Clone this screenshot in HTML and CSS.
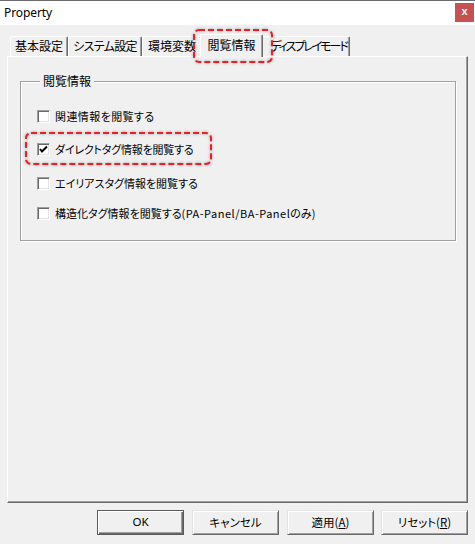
FILE: index.html
```html
<!DOCTYPE html>
<html lang="ja">
<head>
<meta charset="utf-8">
<title>Property</title>
<link rel="stylesheet" href="styles.css">
</head>
<body>
<div class="window">
  <div class="titlebar">
    <span class="title">Property</span>
    <span class="close">x</span>
  </div>
  <div class="content">
    <div class="tabs">
      <div class="tab t1">基本設定</div>
      <div class="tab t2">システム設定</div>
      <div class="tab t3">環境変数</div>
      <div class="tab t4 active">閲覧情報</div>
      <div class="tab t5">ディスプレイモード</div>
    </div>
    <div class="panel">
      <fieldset class="group">
        <legend>閲覧情報</legend>
        <div class="row r1"><span class="cb"></span><span class="lbl">関連情報を閲覧する</span></div>
        <div class="row r2"><span class="cb checked"><svg viewBox="0 0 13 13" width="13" height="13"><path d="M3 6 L5 8.5 L10 3.5" fill="none" stroke="#000" stroke-width="2"/></svg></span><span class="lbl">ダイレクトタグ情報を閲覧する</span></div>
        <div class="row r3"><span class="cb"></span><span class="lbl">エイリアスタグ情報を閲覧する</span></div>
        <div class="row r4"><span class="cb"></span><span class="lbl">構造化タグ情報を閲覧する<span class="latin">(PA-Panel/BA-Panel</span>のみ)</span></div>
      </fieldset>
    </div>
    <div class="buttons">
      <div class="btn default">OK</div>
      <div class="btn">キャンセル</div>
      <div class="btn">適用(<u>A</u>)</div>
      <div class="btn">リセット(<u>R</u>)</div>
    </div>
  </div>
  <svg class="hl hl-tab" width="82" height="36" viewBox="0 0 82 36"><rect x="2" y="2" width="78" height="32" rx="5" ry="5"/></svg>
  <svg class="hl hl-row" width="189" height="35" viewBox="0 0 189 35"><rect x="2" y="2" width="185" height="31" rx="5" ry="5"/></svg>
</div>
</body>
</html>
```

FILE: styles.css
```css
* { box-sizing: border-box; }
html, body { margin: 0; padding: 0; }
body {
  width: 475px;
  height: 544px;
  overflow: hidden;
  background: #f0f0f0;
  font-family: "Noto Sans CJK JP", "Noto Sans", sans-serif;
  font-feature-settings: "palt" 1;
  font-size: 12px;
  color: #000;
}
.window {
  position: relative;
  width: 475px;
  height: 544px;
  background: #f0f0f0;
  border-top: 1px solid #6b6b6b;
}
.titlebar {
  height: 24px;
  background: #fff;
  display: flex;
  align-items: flex-start;
}
.title {
  font-family: "Noto Sans", sans-serif;
  font-size: 12px;
  line-height: 24px;
  padding-left: 4px;
  letter-spacing: -0.1px;
}
.close {
  margin-left: auto;
  margin-right: 1px;
  margin-top: 2px;
  width: 19px;
  height: 19px;
  background: #c75050;
  color: #fff;
  font-family: "Liberation Sans", sans-serif;
  font-weight: bold;
  font-size: 11px;
  line-height: 17px;
  text-align: center;
}
.content {
  padding-top: 9px;
}
.tabs {
  display: flex;
  align-items: flex-end;
  height: 22px;
  margin-left: 10px;
}
.tab {
  position: relative;
  height: 20px;
  background: #f0f0f0;
  border-top: 1px solid #fff;
  border-left: 1px solid #fff;
  border-right: 1px solid #696969;
  box-shadow: inset -1px 0 0 #a0a0a0;
  text-align: center;
  line-height: 18px;
  white-space: nowrap;
  font-size: 12px;
  border-top-left-radius: 2px;
  border-top-right-radius: 2px;
}
.t1 { width: 58px; }
.t2 { width: 74px; letter-spacing: -0.7px; }
.t3 { width: 60px; }
.t4 { width: 63px; }
.t5 { width: 89px; padding-left: 6px; letter-spacing: -2.1px; }
.tab.active {
  height: 23px;
  margin: 0 -2px -1px -2px;
  z-index: 2;
  line-height: 20px;
}
.panel {
  position: relative;
  z-index: 1;
  margin-left: 7px;
  width: 461px;
  height: 447px;
  border-top: 1px solid #fff;
  border-left: 1px solid #fff;
  border-right: 1px solid #696969;
  border-bottom: 1px solid #696969;
  box-shadow: inset -1px -1px 0 #a0a0a0;
  padding-top: 16px;
  padding-left: 12px;
}
.group {
  margin: 0;
  width: 436px;
  height: 168px;
  padding: 19px 0 0 16px;
  border: 1px solid #a0a0a0;
  box-shadow: inset 1px 1px 0 #fff, 1px 1px 0 #fff;
  min-inline-size: 0;
}
.group legend {
  margin-left: 3px;
  padding: 0 3px;
  font-size: 12px;
  line-height: 16px;
  background: #f0f0f0;
}
.row {
  display: flex;
  align-items: center;
  height: 16px;
  font-size: 11px;
  white-space: nowrap;
}
.r1 .lbl { letter-spacing: 0.4px; }
.r2 .lbl { letter-spacing: -0.2px; }
.latin { letter-spacing: 0.5px; }
.r2 { margin-top: 17px; }
.r3 { margin-top: 18px; }
.r4 { margin-top: 14px; }
.cb {
  flex: none;
  width: 13px;
  height: 13px;
  background: #fff;
  border: 1px solid;
  border-color: #a0a0a0 #fff #fff #a0a0a0;
  box-shadow: inset 1px 1px 0 #696969, inset -1px -1px 0 #e3e3e3;
  position: relative;
}
.cb svg {
  display: block;
  margin: -1px;
}
.lbl {
  margin-left: 5px;
  line-height: 16px;
}
.buttons {
  display: flex;
  justify-content: flex-end;
  gap: 8px;
  margin-top: 7px;
  padding-right: 7px;
}
.btn {
  width: 87px;
  height: 25px;
  background: #f0f0f0;
  border: 1px solid;
  border-color: #e3e3e3 #696969 #696969 #e3e3e3;
  box-shadow: inset 1px 1px 0 #fff, inset -1px -1px 0 #a0a0a0;
  text-align: center;
  line-height: 22px;
  font-size: 11.5px;
}
.btn:last-child { margin-left: -1px; }
.btn.default {
  border: 1px solid #5a5a5a;
  box-shadow: inset 1px 1px 0 #fff, inset -1px -1px 0 #696969, inset -2px -2px 0 #a0a0a0;
  font-family: "Noto Sans", sans-serif;
}
.btn u { text-underline-offset: 1px; }
.hl {
  position: absolute;
  z-index: 5;
  filter: drop-shadow(0 0 1.5px rgba(0,0,0,0.35));
}
.hl rect {
  fill: none;
  stroke: #e8202a;
  stroke-width: 2;
  stroke-dasharray: 6 3;
}
.hl-tab { left: 192px; top: 27px; }
.hl-row { left: 24px; top: 130px; }
```
